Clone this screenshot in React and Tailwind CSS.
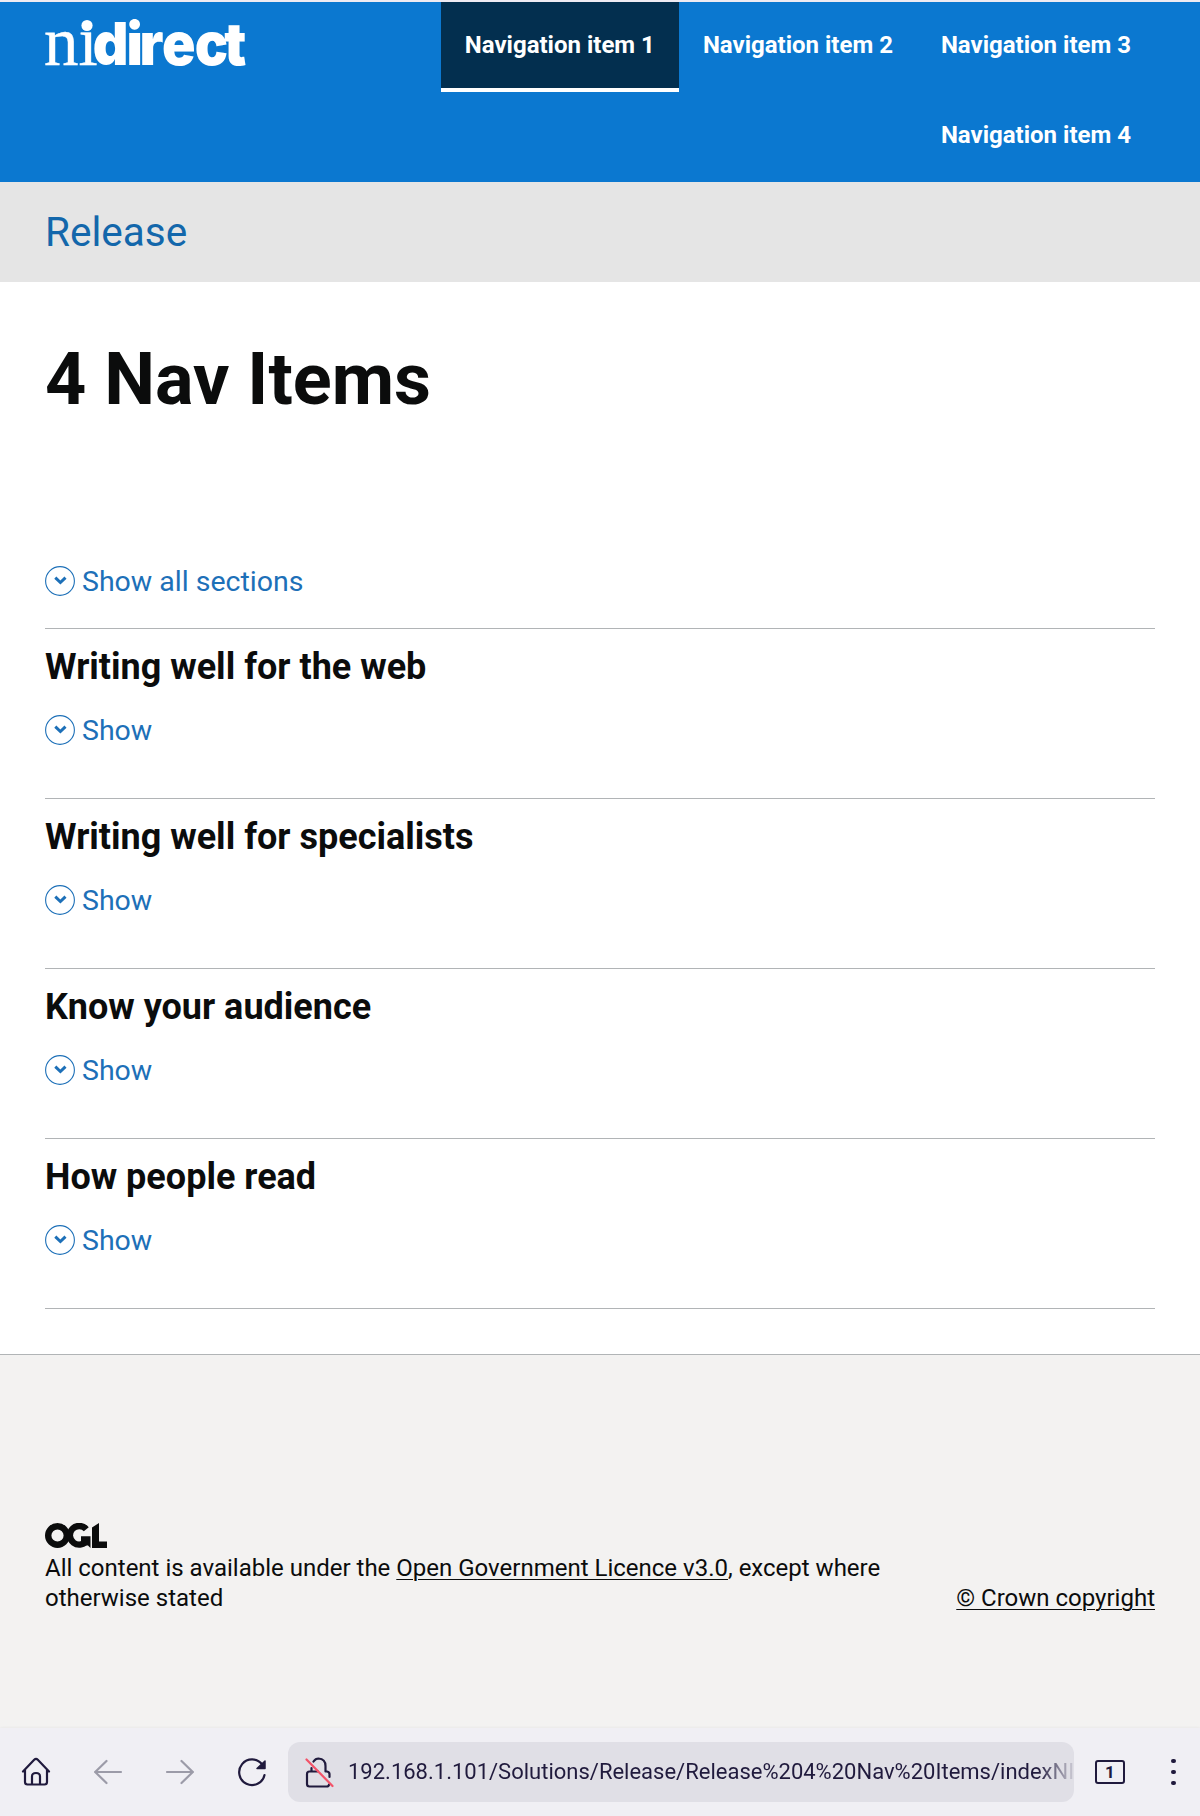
import React from "react";

const sections = [
  "Writing well for the web",
  "Writing well for specialists",
  "Know your audience",
  "How people read",
];

function Logo() {
  return (
    <svg width="202" height="50" viewBox="0 0 202 50" className="mt-[17px] block shrink-0 overflow-visible" fill="#fff" role="img" aria-label="nidirect">
      <defs>
        <clipPath id="serif">
          <path d="M-2 0H34V50H-2ZM34 12.500H62V50H34Z" />
        </clipPath>
      </defs>
      <g clipPath="url(#serif)">
        <text x="-1 33.500" y="45.500" fontFamily="Liberation Serif" fontSize="69" stroke="#fff" strokeWidth="0.4">ni</text>
      </g>
      <circle cx="42" cy="6.500" r="5.600" />
      <g transform="scale(.93,1)">
        <text x="51.300 87.600 101.500 125.800 161 192.700" y="45.500" fontFamily="Inter" fontWeight="900" fontSize="59.500">direct</text>
      </g>
    </svg>
  );
}

function NavItem({ children, active }) {
  return (
    <a className={"flex h-[90px] items-start border-b-4 px-6 pt-7 text-[24px] leading-[30px] font-bold text-white " + (active ? "border-white bg-[#032f4f]" : "border-transparent")}>
      {children}
    </a>
  );
}

function Toggle({ children }) {
  return (
    <div className="flex h-[30px] items-center gap-[7px] text-[28.5px] leading-[30px] text-[#1d70b8]">
      <svg width="30" height="30" viewBox="0 0 30 30" fill="none" stroke="#1d70b8">
        <circle cx="15" cy="15" r="14.400" strokeWidth="1.100" />
        <path d="M10.300 11.600L15.400 16.500L20.500 11.600" strokeWidth="3" />
      </svg>
      <span className="pt-0.5">{children}</span>
    </div>
  );
}

function OglLogo() {
  return (
    <svg width="62" height="25" viewBox="0 0 62 25" className="block" fill="none" stroke="#0b0c0c">
      <circle cx="12.500" cy="12.500" r="9.300" strokeWidth="6.400" />
      <path d="M41.300 6.300A9.300 9.300 0 1 0 42.200 17" strokeWidth="6.400" />
      <path d="M36 13.300H45.500V25L43 22.500L38 22L39.500 18.500H36Z" fill="#0b0c0c" stroke="none" />
      <path d="M47 4.500L54 0V18.500H62V25H47Z" fill="#0b0c0c" stroke="none" />
    </svg>
  );
}

function BrowserBar() {
  return (
    <div className="flex h-[88px] items-start bg-[#f0eff4] pt-[14px] shadow-[0_0_3px_rgba(0,0,0,0.07)]">
      <div className="flex h-[60px] w-[288px] items-center">
        <svg width="288" height="60" viewBox="0 0 288 60" fill="none" stroke="#201a3d" strokeWidth="2.200" strokeLinecap="round" strokeLinejoin="round">
          <path d="M23 29.500L34.200 17.800Q36 16 37.800 17.800L49 29.500M25 28V40Q25 42.500 27.500 42.500H44.500Q47 42.500 47 40V28M32 42V34.500Q32 31 36 31Q40 31 40 34.500V42" />
          <path stroke="#9c9ba8" d="M121 30H95M106.500 19L95.200 30L106.500 41M167 30H193M181.500 19L192.800 30L181.500 41" />
          <path d="M264.500 33A12.800 12.800 0 1 1 262.200 22.500" />
          <path d="M265 19V26.500H257Z" fill="#201a3d" strokeWidth="1.500" />
        </svg>
      </div>
      <div className="flex h-[60px] w-[786px] items-center overflow-hidden rounded-xl bg-[#e0dfe6]">
        <svg width="60" height="60" viewBox="0 0 60 60" className="shrink-0" fill="none" stroke="#201a3d" strokeWidth="2.200" strokeLinecap="round" strokeLinejoin="round">
          <path d="M23.500 29V26M25.500 19.500Q27.500 16.500 30.500 16.500Q37.500 17 37.500 24V29.500H39Q41.500 30 41.500 32V35M23.500 29.500H21.500Q19 29.500 19 32V42Q19 44.500 21.500 44.500H38.500Q41 44.500 41 42.500M23.500 29.500H30" />
          <path stroke="#f35369" d="M18.500 17.500L44.500 44" />
        </svg>
        <div className="w-[725px] overflow-hidden whitespace-nowrap text-[22px] leading-[30px] text-[#201a3d] [mask-image:linear-gradient(to_right,#000_690px,transparent_730px)]">
          192.168.1.101/Solutions/Release/Release%204%20Nav%20Items/indexNI.html
        </div>
      </div>
      <div className="ml-[21px] mt-[18px] flex h-6 w-[30px] items-center justify-center rounded-[3px] border-2 border-[#201a3d] text-[17px] leading-none font-bold text-[#201a3d]">1</div>
      <div className="ml-[46px] flex h-[60px] flex-col items-center justify-center gap-[6.500px]">
        <span className="size-[4.5px] rounded-full bg-[#201a3d]" />
        <span className="size-[4.5px] rounded-full bg-[#201a3d]" />
        <span className="size-[4.5px] rounded-full bg-[#201a3d]" />
      </div>
    </div>
  );
}

export default function App() {
  return (
    <div className="flex h-[1816px] w-[1200px] flex-col overflow-hidden bg-white font-[Roboto,sans-serif] text-[#0b0c0c]">
      <header className="flex h-[182px] shrink-0 justify-between border-t-2 border-[#efebf2] bg-[#0b78d0] px-[45px]">
        <Logo />
        <nav className="flex w-[760px] flex-wrap content-start justify-end">
          <NavItem active>Navigation item 1</NavItem>
          <NavItem>Navigation item 2</NavItem>
          <NavItem>Navigation item 3</NavItem>
          <NavItem>Navigation item 4</NavItem>
        </nav>
      </header>
      <div className="flex h-[100px] shrink-0 items-center bg-[#e5e5e5] px-[45px] text-[40.5px] leading-[50px] text-[#1367ab]">Release</div>
      <main className="h-[1072px] shrink-0 px-[45px] pt-[59px]">
        <h1 className="h-[225px] text-[72px] leading-[78px] font-bold">4 Nav Items</h1>
        <Toggle>Show all sections</Toggle>
        <div className="mt-8 border-b border-[#b1b4b6]">
          {sections.map((title) => (
            <section key={title} className="h-[170px] border-t border-[#b1b4b6] pt-4">
              <h2 className="mb-[25px] text-[36px] leading-[45px] font-bold">{title}</h2>
              <Toggle>Show</Toggle>
            </section>
          ))}
        </div>
      </main>
      <footer className="flex h-[374px] shrink-0 items-start justify-between border-t border-[#b1b4b6] bg-[#f3f2f1] px-[45px] pt-[168px] text-[24px] leading-[30px]">
        <div>
          <OglLogo />
          <p className="mt-[5px] w-[860px]">
            All content is available under the <a className="underline decoration-1 underline-offset-[3px]">Open Government Licence v3.0</a>, except where otherwise stated
          </p>
        </div>
        <a className="mt-[60px] whitespace-nowrap underline decoration-1 underline-offset-[3px]">© Crown copyright</a>
      </footer>
      <BrowserBar />
    </div>
  );
}
